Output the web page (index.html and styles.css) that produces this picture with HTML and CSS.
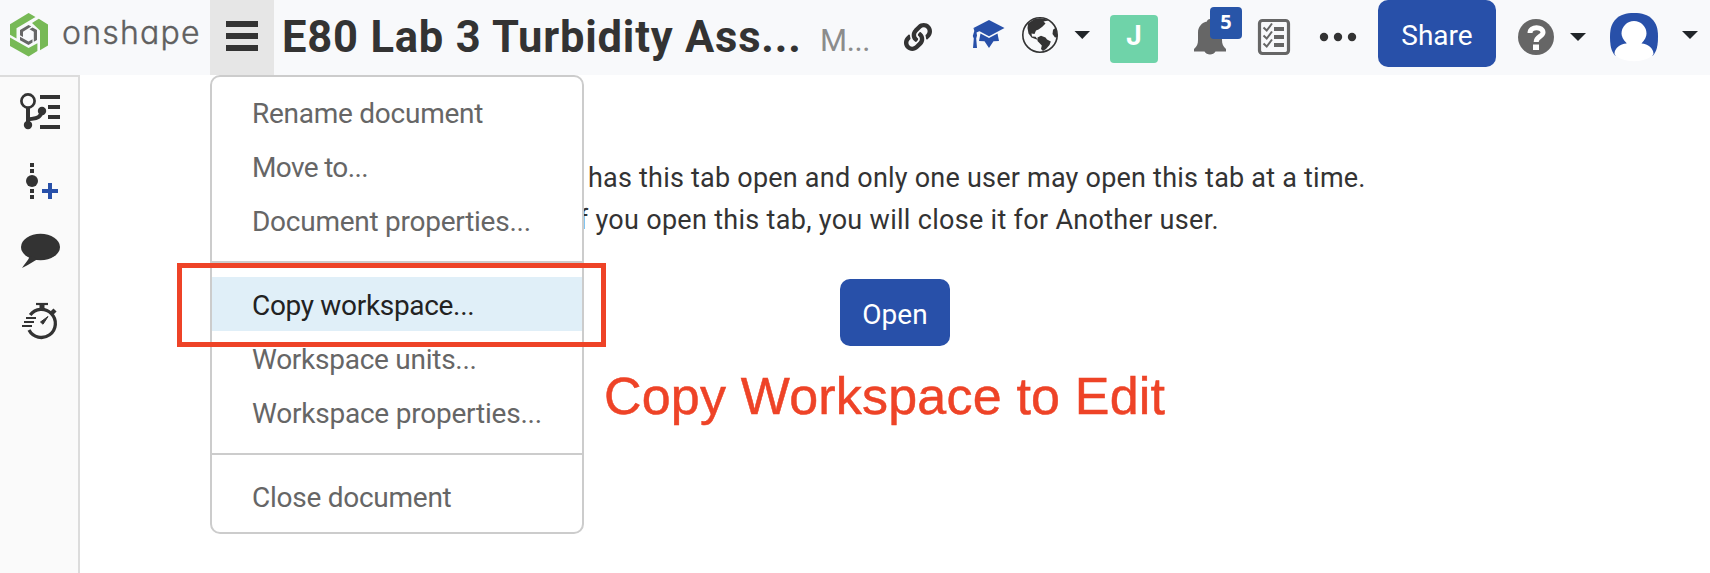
FILE: index.html
```html
<!DOCTYPE html>
<html lang="en">
<head>
<meta charset="utf-8">
<title>E80 Lab 3 Turbidity</title>
<link rel="stylesheet" href="styles.css">
</head>
<body>
<header class="topbar">
  <div class="brand">
    <svg class="brand-mark" width="54" height="75" viewBox="0 0 54 75">
      <g fill="#77b956">
        <path d="M10 24.200 28.600 13 35.500 17 16.500 28.300V38.500L10 34.800Z"/>
        <path d="M32 23 38.800 18.700 48 24.500V45.500L40 50.300V30.500Z"/>
        <path d="M10 37.500 28.600 48 37.400 43.300V51L28.600 56.500 10 46Z"/>
      </g>
      <g fill="#666">
        <path d="M20 30 28.500 25 31.300 26.600 23 31.800V37L20 35.300Z"/>
        <path d="M29.500 29.200 32.500 27.400 37 30V40L33.800 41.800V31.700Z"/>
        <path d="M20 36.800 28.500 41.500 32.500 39.300V42.600L28.500 45 20 40.200Z"/>
      </g>
    </svg>
    <span class="brand-name">onshape</span>
  </div>
  <button class="menu-button" aria-label="Menu"><span class="bar"></span><span class="bar"></span><span class="bar"></span></button>
  <h1 class="title">E80 Lab 3 Turbidity Ass...</h1>
  <span class="branch">M...</span>
  <div class="tools">
    <svg width="60" height="75" viewBox="890 0 60 75" fill="#333">
      <path transform="translate(904 23) scale(.0547)" d="M326.612 185.391c59.747 59.809 58.927 155.698.36 214.59-.11.12-.24.25-.36.37l-67.2 67.2c-59.27 59.27-155.699 59.262-214.96 0-59.27-59.26-59.27-155.7 0-214.96l37.106-37.106c9.84-9.84 26.786-3.3 27.294 10.606.648 17.722 3.826 35.527 9.69 52.721 1.986 5.822.567 12.262-3.783 16.612l-13.087 13.087c-28.026 28.026-28.905 73.66-1.155 101.96 28.024 28.579 74.086 28.749 102.325.51l67.2-67.19c28.191-28.191 28.073-73.757 0-101.83-3.701-3.694-7.429-6.564-10.341-8.569a16.037 16.037 0 0 1-6.947-12.606c-.396-10.567 3.348-21.456 11.698-29.806l21.054-21.055c5.521-5.521 14.182-6.199 20.584-1.731a152.482 152.482 0 0 1 20.522 17.197zM467.547 44.449c-59.261-59.262-155.69-59.27-214.96 0l-67.2 67.2c-.12.12-.25.25-.36.37-58.566 58.892-59.387 154.781.36 214.59a152.454 152.454 0 0 0 20.521 17.196c6.402 4.468 15.064 3.789 20.584-1.731l21.054-21.055c8.35-8.35 12.094-19.239 11.698-29.806a16.037 16.037 0 0 0-6.947-12.606c-2.912-2.005-6.64-4.875-10.341-8.569-28.073-28.073-28.191-73.639 0-101.83l67.2-67.19c28.239-28.239 74.3-28.069 102.325.51 27.75 28.3 26.872 73.934-1.155 101.96l-13.087 13.087c-4.35 4.35-5.769 10.79-3.783 16.612 5.864 17.194 9.042 34.999 9.69 52.721.509 13.906 17.454 20.446 27.294 10.606l37.106-37.106c59.271-59.259 59.271-155.699.001-214.959z"/>
    </svg>
    <svg width="60" height="75" viewBox="950 0 60 75" fill="#2850a9">
      <path d="M989 20 1004.500 28 989 36.300 973.500 28Z"/>
      <path d="M980.500 33.500 989 38 997.500 33.500 999 41 993.500 41.300 989 48 984.500 41.300 979 41Z"/>
      <path d="M973.500 28 983 29.500 976.500 32.500 977 35.500l-.800 3 .800 9.500h-4l.8-9.500-1-2.500 1.500-5Z"/>
    </svg>
    <svg width="90" height="75" viewBox="1010 0 90 75">
      <circle cx="1040" cy="35" r="17.200" fill="none" stroke="#333" stroke-width="1.600"/>
      <path fill="#333" d="M1028 23.500 1034 19.300 1040 18.300 1045 19 1048.500 20.500 1043.500 21.500 1045.500 23.500 1042 27 1038.500 29.500 1036 30.500 1034.500 34 1031.500 33.500 1032 36.500 1035.500 36.800 1038 40 1036 39.200 1031.500 37.500 1028.500 33.500 1027.500 28Z"/>
      <path fill="#333" d="M1037.500 37.500 1041 35.800 1045.500 37.500 1047 39.500 1050.800 41.500 1049.500 45 1046 49 1043 51 1041 49 1041.800 45.500 1037.500 41Z"/>
      <path fill="#333" d="M1056 27.500 1053 29.800 1052.500 34 1055 37.500 1057.500 37Z"/>
      <path fill="#212529" d="M1074.500 31h15.500l-7.700 8Z"/>
    </svg>
    <span class="user-tile">J</span>
    <span class="bell">
      <svg width="48" height="75" viewBox="1194 0 48 75" fill="#666">
        <path d="M1194 51.500V49C1197 46.500 1198 44 1198 40V32.500C1198 26.500 1202 22.500 1207 21.500 1207 18 1213 18 1213 21.500 1218 22.500 1222 26.500 1222 32.500V40C1222 44 1223 46.500 1226 49V51.500H1215.500C1213.500 55.500 1206.500 55.500 1204.500 51.500Z"/>
      </svg>
      <span class="badge">5</span>
    </span>
    <svg class="tasks" width="34" height="75" viewBox="1257 0 34 75" fill="none" stroke="#666">
      <rect x="1259.500" y="20.500" width="29" height="33" rx="3" stroke-width="3.200"/>
      <path stroke-width="4" d="M1274 29h10M1274 37h10M1274 45h10"/>
      <path stroke-width="2" d="M1263.500 27.500 1266.700 30.500 1272 23.500M1263.500 35.500 1266.700 38.500 1272 31.500M1263.500 43.500 1266.700 46.500 1272 39.500"/>
    </svg>
    <svg class="more" width="40" height="75" viewBox="1318 0 40 75" fill="#333">
      <circle cx="1324" cy="37" r="4.200"/><circle cx="1338" cy="37" r="4.200"/><circle cx="1352" cy="37" r="4.200"/>
    </svg>
    <button class="primary share"><span>Share</span></button>
    <svg width="92" height="75" viewBox="1496 0 92 75">
      <circle cx="1536" cy="37" r="18" fill="#666"/>
      <path d="M1530 33C1530 26 1543 26 1543 32.500 1543 36.500 1536.200 36.500 1536.200 42" fill="none" stroke="#fff" stroke-width="5"/>
      <path fill="#fff" d="M1533 44.500h6v5.500h-6Z"/>
      <path fill="#212529" d="M1570 33h16l-8 8Z"/>
    </svg>
    <svg width="122" height="75" viewBox="1588 0 122 75">
      <path fill="#2850a9" d="M1634 13C1650 13 1658 21 1658 36 1658 45 1657 51 1653 55.500H1615C1611 51 1610 45 1610 36 1610 21 1618 13 1634 13Z"/>
      <path fill="#fff" d="M1626.500 43C1623 40 1621.500 36 1621.500 33.500A12.500 12.500 0 0 1 1646.500 33.500C1646.500 36 1645 40 1641.500 43.500 1648 44 1653.500 48 1653.500 54 1648 63.500 1620 63.500 1614.500 54 1614.500 48 1620 44 1626.500 43.500Z"/>
      <path fill="#212529" d="M1682 31h16l-8 8Z"/>
    </svg>
  </div>
</header>
<div class="workspace">
  <nav class="sidebar">
    <svg width="78" height="70" viewBox="0 77 78 70">
      <circle cx="28" cy="101" r="6.600" fill="none" stroke="#333" stroke-width="2.700"/>
      <path d="M28 108v17M28 119.500C36 118 40 119 42 111" fill="none" stroke="#333" stroke-width="4"/>
      <circle cx="28" cy="125" r="4.200" fill="#333"/><circle cx="42" cy="111" r="4.200" fill="#333"/>
      <path d="M40 97h20M48 107h12M48 117h12M40 127h20" stroke="#333" stroke-width="4"/>
    </svg>
    <svg width="78" height="70" viewBox="0 147 78 70">
      <path d="M30 163h4v4h-4ZM30 169h4v4h-4ZM30 189h4v4h-4ZM30 195h4v4h-4Z" fill="#333"/>
      <circle cx="32" cy="181" r="6" fill="#333"/>
      <path d="M42 191h16M50 183v16" stroke="#2850a9" stroke-width="4"/>
    </svg>
    <svg width="78" height="70" viewBox="0 217 78 70" fill="#333">
      <ellipse cx="40.500" cy="247" rx="19.500" ry="13.200"/>
      <path d="M30 256C28 261 25 263 22 268 29 264.500 34 261 38 259Z"/>
    </svg>
    <svg width="78" height="70" viewBox="0 287 78 70" fill="none" stroke="#333">
      <path d="M30.200 315A14 14 0 1 1 29 330" stroke-width="3.300"/>
      <path d="M36 304h12" stroke-width="2.200"/><path d="M42 304v5" stroke-width="5"/>
      <path d="M52 313l3-3" stroke-width="4.500"/>
      <path d="M26 318h10M24 322h10M22 326h10" stroke-width="2"/>
      <path d="M40.500 322 48 316.500 43 324.200Z" fill="#333" stroke-width="1"/>
    </svg>
  </nav>
  <main class="content">
    <p class="notice line-one">Another user has this tab open and only one user may open this tab at a time.</p>
    <p class="notice line-two">If you open this tab, you will close it for Another user.</p>
    <button class="primary open"><span>Open</span></button>
  </main>
</div>
<ul class="menu">
  <li class="m1">Rename document</li>
  <li class="m2">Move to...</li>
  <li class="m3">Document properties...</li>
  <li class="divider"></li>
  <li class="active">Copy workspace...</li>
  <li class="m5">Workspace units...</li>
  <li class="m6">Workspace properties...</li>
  <li class="divider"></li>
  <li class="m7">Close document</li>
</ul>
<div class="highlight"></div>
<div class="callout">Copy Workspace to Edit</div>
</body>
</html>
```
FILE: styles.css
```css
* { box-sizing: border-box; }
body { margin: 0; width: 1710px; height: 573px; overflow: hidden; background: #fff; font-family: Roboto, "Liberation Sans", sans-serif; color: #333; }
button { border: 0; padding: 0; font: inherit; }
svg { display: block; flex: none; }
.topbar { display: flex; height: 75px; background: #f8f9fb; }
.brand { display: flex; width: 210px; }
.brand-name { margin-left: 8px; font: 300 32px/66px Inter, sans-serif; font-feature-settings: "cv11"; color: #606060; letter-spacing: 1.2px; -webkit-text-stroke: .4px #606060; }
.menu-button { width: 64px; background: #e6e6e6; display: flex; flex-direction: column; gap: 6px; padding: 21px 16px 0; }
.bar { width: 32px; height: 6px; background: #333; }
.title { margin: 0; padding-left: 8px; width: 546px; font-size: 43.5px; font-weight: 700; line-height: 75px; letter-spacing: .8px; white-space: nowrap; }
.branch { width: 70px; font-size: 31px; line-height: 82px; font-weight: 400; color: #8c8c8c; letter-spacing: -.4px; white-space: nowrap; }
.tools { display: flex; }
.user-tile { width: 48px; height: 48px; margin: 15px 0 0 10px; border-radius: 4px; background: #6fd3a9; color: #fff; font: 700 27px/41px Inter, sans-serif; text-align: center; }
.bell { position: relative; margin-left: 36px; }
.badge { position: absolute; left: 16px; top: 7px; width: 32px; height: 32px; border-radius: 4px; background: #2855a8; color: #fff; font: 700 20px/29px "Noto Sans", sans-serif; text-align: center; }
.tasks { margin-left: 15px; }
.more { margin-left: 27px; }
.primary { background: #2850a9; color: #fff; border-radius: 10px; height: 67px; padding-top: 4px; font-size: 28px; }
.share { width: 118px; margin-left: 20px; }
.workspace { display: flex; height: 498px; }
.sidebar { width: 80px; border-top: 2px solid #dcdcdc; border-right: 2px solid #dcdcdc; background: #fafafa; }
.content { flex: 1; display: flex; flex-direction: column; align-items: center; padding-top: 82px; }
.notice { margin: 0; font-size: 27px; line-height: 42px; white-space: nowrap; }
.line-one { letter-spacing: .22px; }
.line-two { letter-spacing: .3px; }
.open { width: 110px; margin-top: 38px; }
.menu { position: absolute; left: 210px; top: 75px; width: 374px; height: 459px; margin: 0; padding: 8px 0; list-style: none; background: #fff; border: 2px solid #ccc; border-radius: 10px; font-size: 28px; line-height: 58px; letter-spacing: -.26px; color: #666; }
.menu li { height: 54px; padding-left: 40px; white-space: nowrap; }
.menu .m2 { letter-spacing: -.65px; }
.menu .m6 { letter-spacing: -.22px; }
.menu .divider { height: 2px; margin: 14px 0; padding: 0; background: #ccc; }
.menu .active { background: #e0eff8; color: #222; letter-spacing: -.32px; }
.highlight { position: absolute; left: 177px; top: 263px; width: 429px; height: 84px; border: 5px solid #ee4327; }
.callout { position: absolute; left: 604px; top: 366px; font: 52px/61px "Liberation Sans", Arial, sans-serif; letter-spacing: .2px; color: #ee4327; -webkit-text-stroke: .5px #ee4327; white-space: nowrap; }
```
